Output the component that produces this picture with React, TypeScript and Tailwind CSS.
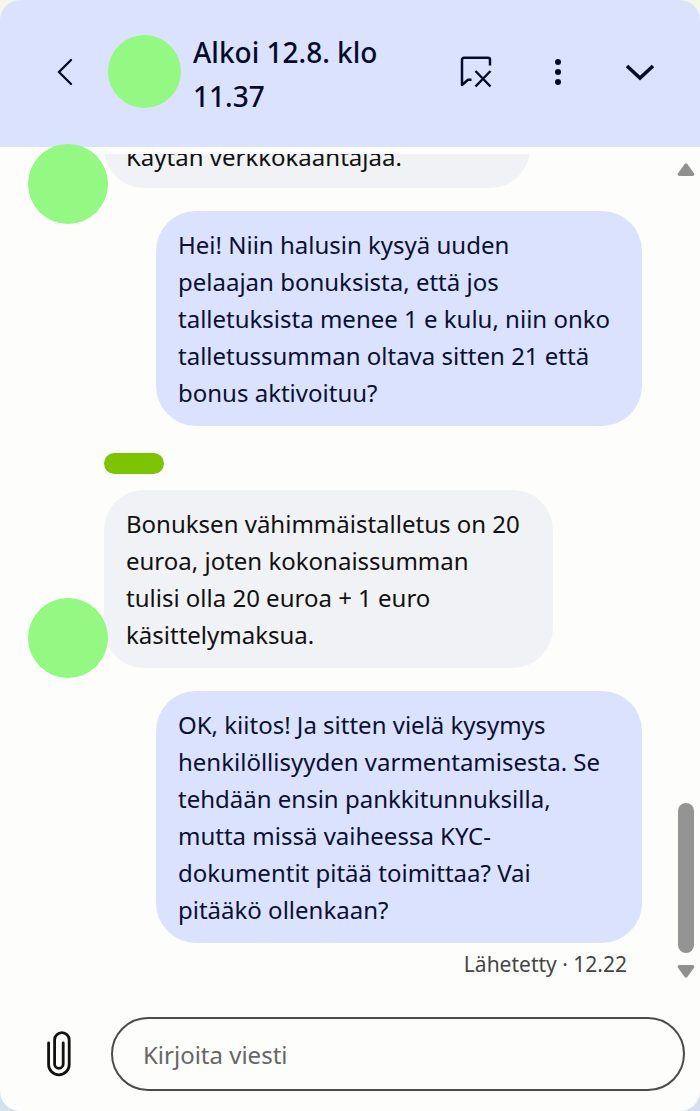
import { clsx } from "clsx";

interface Message {
  id: number;
  mine: boolean;
  text: string;
}

const messages: Message[] = [
  {
    id: 1,
    mine: true,
    text: "Hei! Niin halusin kysyä uuden\npelaajan bonuksista, että jos\ntalletuksista menee 1 e kulu, niin onko\ntalletussumman oltava sitten 21 että\nbonus aktivoituu?",
  },
  {
    id: 2,
    mine: false,
    text: "Bonuksen vähimmäistalletus on 20\neuroa, joten kokonaissumman\ntulisi olla 20 euroa + 1 euro\nkäsittelymaksua.",
  },
  {
    id: 3,
    mine: true,
    text: "OK, kiitos! Ja sitten vielä kysymys\nhenkilöllisyyden varmentamisesta. Se\ntehdään ensin pankkitunnuksilla,\nmutta missä vaiheessa KYC-\ndokumentit pitää toimittaa? Vai\npitääkö ollenkaan?",
  },
];

function Header() {
  return (
    <header className="flex h-[147px] shrink-0 items-center rounded-t-[20px] bg-[#dbe2fe] pr-9 pb-1 pl-[41px] text-[#060b2c]">
      <button type="button" aria-label="Takaisin" className="flex size-12 items-center justify-center">
        <svg width="16" height="28" viewBox="0 0 16 28" fill="none" stroke="currentColor" strokeWidth="2.3">
          <path d="M14 2 2 14l12 12" strokeLinecap="round" />
        </svg>
      </button>
      <div className="ml-[19px] size-[73px] shrink-0 rounded-full bg-[#94f982]" />
      <h1 className="ml-3 max-w-[220px] pt-1 text-[28px] leading-[44px] font-medium">Alkoi 12.8. klo 11.37</h1>
      <div className="ml-auto flex gap-[34px]">
        <button type="button" aria-label="Lopeta keskustelu" className="flex size-12 items-center justify-center">
          <svg width="32" height="32" viewBox="0 0 32 32" fill="none" stroke="currentColor" strokeWidth="2.5">
            <path
              d="M30 9.500V3.800A2 2 0 0 0 28 1.800H4a2 2 0 0 0-2 2V29l6-5.200h3.500"
              strokeLinejoin="round"
            />
            <path d="m15.500 15 15 15.500M30.500 15l-15 15.500" />
          </svg>
        </button>
        <button type="button" aria-label="Lisää" className="flex size-12 items-center justify-center">
          <svg width="8" height="28" viewBox="0 0 8 28" fill="currentColor">
            <circle cx="4" cy="4" r="3" />
            <circle cx="4" cy="14" r="3" />
            <circle cx="4" cy="24" r="3" />
          </svg>
        </button>
        <button type="button" aria-label="Pienennä" className="flex size-12 items-center justify-center">
          <svg width="30" height="18" viewBox="0 0 30 18" fill="none" stroke="currentColor" strokeWidth="3.600">
            <path d="m2 3 13 12L28 3" />
          </svg>
        </button>
      </div>
    </header>
  );
}

function Bubble({ message }: { message: Message }) {
  return (
    <p
      className={clsx(
        "rounded-[40px] px-[22px] py-[15px] text-2xl leading-[37px] whitespace-pre-line",
        message.mine
          ? "w-[486px] self-end bg-[#dbe2fe] text-[#0a1033]"
          : "w-[449px] bg-[#f1f2f5] text-[#111]",
      )}
    >
      {message.text}
    </p>
  );
}

function Scrollbar() {
  return (
    <div className="flex w-7 shrink-0 flex-col items-center pt-4 pb-1">
      <button type="button" aria-label="Vieritä ylös">
        <svg className="block" width="18" height="13" viewBox="0 0 18 13" fill="#909090">
          <path d="M7.500 1.200a2 2 0 0 1 3 0l6.500 9q1.200 2.600-1.500 2.800h-13Q-.2 12.800 1 10.200z" />
        </svg>
      </button>
      <div className="flex w-4 flex-1 flex-col justify-end pb-3">
        <div className="h-[150px] rounded-full bg-[#949494]" />
      </div>
      <button type="button" aria-label="Vieritä alas">
        <svg className="block" width="18" height="13" viewBox="0 0 18 13" fill="#909090">
          <path d="M7.500 11.800a2 2 0 0 0 3 0l6.500-9Q18.200.2 15.500 0h-13Q-.2.2 1 2.800z" />
        </svg>
      </button>
    </div>
  );
}

export default function App() {
  return (
    <div className="min-h-screen bg-linear-to-b from-[#f4f7ea] to-[#d3e0ee] font-['Noto_Sans','Open_Sans',sans-serif]">
      <main className="flex min-h-screen flex-col rounded-[20px] bg-[#fdfdfc]">
        <Header />
        <section className="flex flex-1">
          <div className="flex flex-1 flex-col pt-[7px] pr-[30px] pl-26">
            <div className="relative mb-[23px] w-[426px]">
              {/* scrolled partly out of view */}
              <div className="flex h-[34px] flex-col justify-end overflow-hidden">
                <p className="shrink-0 rounded-[40px] bg-[#f1f2f5] px-[22px] pt-8 pb-[13px] text-2xl leading-[37px] text-[#111]">
                  Käytän verkkokääntäjää.
                </p>
              </div>
              <div className="absolute bottom-[-36px] left-[-76px] size-20 rounded-full bg-[#94f982]" />
            </div>
            <Bubble message={messages[0]} />
            <div className="mt-[27px] mb-4 h-[21px] w-[60px] rounded-full bg-[#7dc400]" />
            <div className="relative mb-[23px] flex">
              <Bubble message={messages[1]} />
              <div className="absolute bottom-[-10px] left-[-76px] size-20 rounded-full bg-[#94f982]" />
            </div>
            <Bubble message={messages[2]} />
            <p className="mt-1 pr-[15px] text-right text-[21px] leading-[35px] text-[#444]">Lähetetty · 12.22</p>
          </div>
          <Scrollbar />
        </section>
        <footer className="flex items-center pt-[35px] pr-[15px] pb-5 pl-[35px]">
          <button type="button" aria-label="Liitä tiedosto" className="flex size-12 items-center justify-center">
            <svg width="24" height="46" viewBox="0 0 24 46" fill="none" stroke="#111" strokeWidth="2.800" strokeLinecap="round">
              <path d="M1.600 12v21.500a10.300 10.300 0 0 0 20.600 0V9a7.300 7.300 0 0 0-14.600 0v24a4.300 4.300 0 0 0 8.600 0V12" />
            </svg>
          </button>
          <input
            type="text"
            aria-label="Kirjoita viesti"
            placeholder="Kirjoita viesti"
            className="ml-7 h-[74px] min-w-0 flex-1 rounded-full border-2 border-[#4b4b4b] bg-transparent px-[30px] text-2xl text-[#111] placeholder:text-[#666]"
          />
        </footer>
      </main>
    </div>
  );
}
